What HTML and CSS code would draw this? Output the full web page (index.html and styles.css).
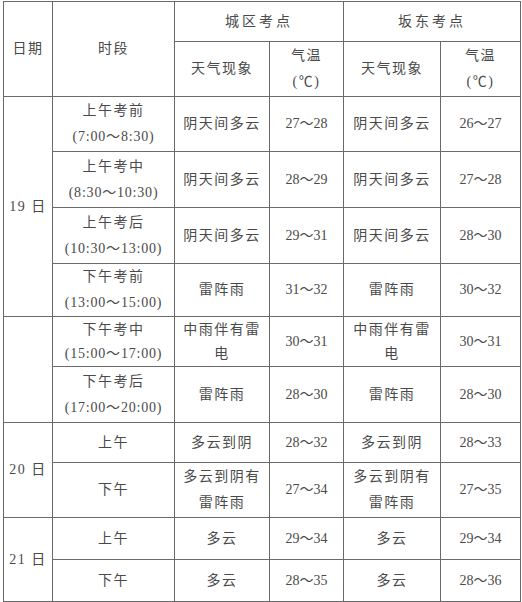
FILE: index.html
```html
<!DOCTYPE html>
<html lang="zh">
<head>
<meta charset="utf-8">
<link rel="stylesheet" href="styles.css">
</head>
<body>
<table class="wx">
  <colgroup>
    <col class="c-date"><col class="c-time"><col class="c-w1"><col class="c-t1"><col class="c-w2"><col class="c-t2">
  </colgroup>
  <tr class="h1">
    <td rowspan="2">日期</td>
    <td rowspan="2">时段</td>
    <td colspan="2" class="site">城区考点</td>
    <td colspan="2" class="site">坂东考点</td>
  </tr>
  <tr class="h2">
    <td>天气现象</td>
    <td class="two">气温<br>(℃)</td>
    <td>天气现象</td>
    <td class="two">气温<br>(℃)</td>
  </tr>
  <tr class="r55">
    <td rowspan="4">19 日</td>
    <td class="two">上午考前<br><span class="tm">(7:00～8:30)</span></td>
    <td>阴天间多云</td><td class="num">27～28</td>
    <td>阴天间多云</td><td class="num">26～27</td>
  </tr>
  <tr class="r56">
    <td class="two">上午考中<br><span class="tm">(8:30～10:30)</span></td>
    <td>阴天间多云</td><td class="num">28～29</td>
    <td>阴天间多云</td><td class="num">27～28</td>
  </tr>
  <tr class="r56">
    <td class="two">上午考后<br><span class="tm">(10:30～13:00)</span></td>
    <td>阴天间多云</td><td class="num">29～31</td>
    <td>阴天间多云</td><td class="num">28～30</td>
  </tr>
  <tr class="r53">
    <td class="two">下午考前<br><span class="tm">(13:00～15:00)</span></td>
    <td>雷阵雨</td><td class="num">31～32</td>
    <td>雷阵雨</td><td class="num">30～32</td>
  </tr>
  <tr class="r50">
    <td rowspan="2"></td>
    <td class="two">下午考中<br><span class="tm">(15:00～17:00)</span></td>
    <td class="two">中雨伴有雷<br>电</td><td class="num">30～31</td>
    <td class="two">中雨伴有雷<br>电</td><td class="num">30～31</td>
  </tr>
  <tr class="r56">
    <td class="two">下午考后<br><span class="tm">(17:00～20:00)</span></td>
    <td>雷阵雨</td><td class="num">28～30</td>
    <td>雷阵雨</td><td class="num">28～30</td>
  </tr>
  <tr class="r40">
    <td rowspan="2">20 日</td>
    <td>上午</td>
    <td>多云到阴</td><td class="num">28～32</td>
    <td>多云到阴</td><td class="num">28～33</td>
  </tr>
  <tr class="r55">
    <td>下午</td>
    <td class="two">多云到阴有<br>雷阵雨</td><td class="num">27～34</td>
    <td class="two">多云到阴有<br>雷阵雨</td><td class="num">27～35</td>
  </tr>
  <tr class="r42">
    <td rowspan="2">21 日</td>
    <td>上午</td>
    <td>多云</td><td class="num">29～34</td>
    <td>多云</td><td class="num">29～34</td>
  </tr>
  <tr class="r42">
    <td>下午</td>
    <td>多云</td><td class="num">28～35</td>
    <td>多云</td><td class="num">28～36</td>
  </tr>
</table>
</body>
</html>
```
FILE: styles.css
```css
html, body {
  margin: 0;
  padding: 0;
  background: #fff;
}
body {
  padding: 1px 0 0 3px;
}
.wx {
  border-collapse: collapse;
  table-layout: fixed;
  width: 517px;
  font-family: "Liberation Serif", "Noto Sans CJK SC", serif;
  font-size: 14px;
  color: #4a4a4a;
}
.wx td {
  border: 1px solid #6a6a6a;
  padding: 0;
  text-align: center;
  vertical-align: middle;
  line-height: 26px;
  letter-spacing: 1.5px;
  overflow: hidden;
}
.c-date { width: 49px; }
.c-time { width: 122px; }
.c-w1 { width: 95px; }
.c-t1 { width: 74px; }
.c-w2 { width: 97px; }
.c-t2 { width: 80px; }
.wx .site { letter-spacing: 3px; }
.wx .num { letter-spacing: 0; }
.tm { letter-spacing: 0.8px; }
.h1 { height: 40px; }
.h2 { height: 55px; }
.r55 { height: 55px; }
.r56 { height: 56px; }
.r53 { height: 53px; }
.r50 { height: 50px; }
.r50 td { line-height: 24px; }
.r40 { height: 40px; }
.r42 { height: 42px; }
```
